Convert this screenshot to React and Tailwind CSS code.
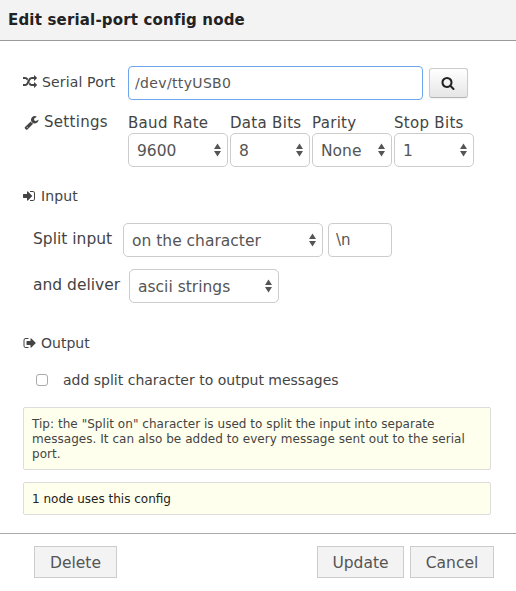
const ICONS = {
  random:
    'M666 481q-60 92-137 273-22-45-37-72.5t-40.5-63.5-51-56.5-63-35-81.5-14.5h-224q-14 0-23-9t-9-23v-192q0-14 9-23t23-9h224q250 0 410 225zm1126 799q0 14-9 23l-320 320q-9 9-23 9-13 0-22.5-9.5t-9.5-22.5v-192q-32 0-85 .5t-81 1-73-1-71-5-64-10.5-63-18.5-58-28.5-59-40-55-53.5-56-69.5q59-93 136-273 22 45 37 72.5t40.5 63.5 51 56.5 63 35 81.5 14.5h256v-192q0-14 9-23t23-9q12 0 24 10l319 319q9 9 9 23zm0-896q0 14-9 23l-320 320q-9 9-23 9-13 0-22.5-9.5t-9.5-22.5v-192h-256q-48 0-87 15t-69 45-51 61.5-45 77.5q-32 62-78 171-29 66-49.5 111t-54 105-64 100-74 83-90 68.5-106.5 42-128 16.5h-224q-14 0-23-9t-9-23v-192q0-14 9-23t23-9h224q48 0 87-15t69-45 51-61.5 45-77.5q32-62 78-171 29-66 49.5-111t54-105 64-100 74-83 90-68.5 106.5-42 128-16.5h256v-192q0-14 9-23t23-9q12 0 24 10l319 319q9 9 9 23z',
  wrench:
    'M448 1472q0-26-19-45t-45-19-45 19-19 45 19 45 45 19 45-19 19-45zm644-420l-682 682q-37 37-90 37-52 0-91-37l-106-108q-38-36-38-90 0-53 38-91l681-681q39 98 114.5 173.5t173.5 114.5zm634-435q0 39-23 106-47 134-164.5 217.5t-258.5 83.5q-185 0-316.5-131.5t-131.5-316.5 131.5-316.5 316.5-131.5q58 0 121.5 16.5t107.5 46.5q16 11 16 28t-16 28l-293 169v224l193 107q5-3 79-48.5t135.5-81 70.5-35.5q15 0 23.5 10t8.5 25z',
  search:
    'M1216 832q0-185-131.5-316.5t-316.5-131.5-316.5 131.5-131.5 316.5 131.5 316.5 316.5 131.5 316.5-131.5 131.5-316.5zm512 832q0 52-38 90t-90 38q-54 0-90-38l-343-342q-179 124-399 124-143 0-273.5-55.5t-225-150-150-225-55.5-273.5 55.5-273.5 150-225 225-150 273.5-55.5 273.5 55.5 225 150 150 225 55.5 273.5q0 220-124 399l343 343q37 37 37 90z',
  signIn:
    'M1312 896q0 26-19 45l-544 544q-19 19-45 19t-45-19-19-45v-288h-448q-26 0-45-19t-19-45v-384q0-26 19-45t45-19h448v-288q0-26 19-45t45-19 45 19l544 544q19 19 19 45zm352-352v704q0 119-84.5 203.5t-203.5 84.5h-320q-13 0-22.5-9.5t-9.5-22.5q0-4-1-20t-.5-26.5 3-23.5 10-19.5 20.5-6.5h320q66 0 113-47t47-113v-704q0-66-47-113t-113-47h-312l-11.5-1-11.5-3-8-5.5-7-9-2-13.5q0-4-1-20t-.5-26.5 3-23.5 10-19.5 20.5-6.5h320q119 0 203.5 84.5t84.5 203.5z',
  signOut:
    'M704 1440q0 4 1 20t.5 26.5-3 23.5-10 19.5-20.5 6.5h-320q-119 0-203.5-84.5t-84.5-203.5v-704q0-119 84.5-203.5t203.5-84.5h320q13 0 22.5 9.5t9.5 22.5q0 4 1 20t.5 26.5-3 23.5-10 19.5-20.5 6.5h-320q-66 0-113 47t-47 113v704q0 66 47 113t113 47h312l11.5 1 11.5 3 8 5.5 7 9 2 13.5zm928-544q0 26-19 45l-544 544q-19 19-45 19t-45-19-19-45v-288h-448q-26 0-45-19t-19-45v-384q0-26 19-45t45-19h448v-288q0-26 19-45t45-19 45 19l544 544q19 19 19 45z',
};

function Icon({ name, className = 'size-3.5' }) {
  return (
    <svg viewBox="0 0 1792 1792" fill="currentColor" className={`shrink-0 ${className}`}>
      <path d={ICONS[name]} />
    </svg>
  );
}

function Select({ value, className }) {
  return (
    <button
      type="button"
      className={`flex h-[34px] items-center justify-between rounded-[5px] border border-[#ccc] bg-white pr-[6px] pl-2 text-[15.5px] text-[#555] ${className}`}
    >
      <span className="pt-[2px] whitespace-nowrap">{value}</span>
      <svg viewBox="0 0 7 14" className="h-3.5 w-[7px] shrink-0" fill="#555">
        <path d="M3.5 0.5 7 6H0zM3.5 13.5 7 8H0z" />
      </svg>
    </button>
  );
}

function Setting({ label, value, className }) {
  return (
    <div className={className}>
      <div className="h-[22px] pt-px text-[15px] leading-[22px] tracking-[0.3px] whitespace-nowrap">
        {label}
      </div>
      <Select value={value} className="w-full" />
    </div>
  );
}

function FooterButton({ children, className }) {
  return (
    <button
      type="button"
      className={`h-8 border border-[#ccc] bg-[#f3f3f3] pt-[2px] text-[15.5px] text-[#555] ${className}`}
    >
      {children}
    </button>
  );
}

export default function App() {
  return (
    <div className="flex h-[591px] w-[516px] flex-col bg-white font-['DejaVu_Sans',Verdana,sans-serif] text-sm text-[#444]">
      <header className="flex h-[41px] shrink-0 items-center border-b border-[#999] bg-[#f3f3f3] pt-[2px] pl-2 text-[15px] font-bold tracking-[0.18px] whitespace-nowrap text-[#222]">
        Edit serial-port config node
      </header>

      <main className="flex h-[492px] shrink-0 flex-col pt-[25px] pr-[25px] pl-[23px]">
        <div className="flex h-[34px] items-center">
          <div className="flex w-[105px] items-center gap-[5px] pb-[2px] tracking-[0.15px] whitespace-nowrap">
            <Icon name="random" />
            Serial Port
          </div>
          <input
            type="text"
            defaultValue="/dev/ttyUSB0"
            className="h-[34px] w-[295px] rounded-[4px] border border-[#6ca6ec] px-1.5 text-sm tracking-[0.35px] text-[#555] outline-none"
          />
          <button
            type="button"
            className="ml-1.5 flex h-[30px] w-[39px] items-center justify-center rounded-[3px] border border-[#ccc] border-b-[#b3b3b3] bg-linear-to-b from-white to-[#e6e6e6] pr-px text-[#222] shadow-[0_1px_2px_rgba(0,0,0,0.05)]"
          >
            <Icon name="search" className="size-3.5" />
          </button>
        </div>

        <div className="mt-[11px] flex h-14">
          <div className="flex h-[22px] w-[105px] items-center gap-[5px] pt-px pl-px text-[15px] tracking-[0.3px] whitespace-nowrap">
            <Icon name="wrench" className="size-[15px]" />
            Settings
          </div>
          <div className="flex gap-0.5">
            <Setting label="Baud Rate" value="9600" className="w-[100px]" />
            <Setting label="Data Bits" value="8" className="w-20" />
            <Setting label="Parity" value="None" className="w-20" />
            <Setting label="Stop Bits" value="1" className="w-20" />
          </div>
        </div>

        <div className="mt-[19px] flex h-5 items-center gap-[5px] tracking-[0.15px]">
          <Icon name="signIn" className="-ml-px size-3.5" />
          Input
        </div>

        <div className="mt-[17px] flex h-[34px] items-center pl-[10px]">
          <span className="w-[90px] pb-[2px] text-[15.5px] whitespace-nowrap">Split input</span>
          <Select value="on the character" className="w-[200px]" />
          <input
            type="text"
            defaultValue="\n"
            className="ml-[5px] h-[34px] w-16 rounded-[4px] border border-[#ccc] px-[7px] text-[15px] text-[#555] outline-none"
          />
        </div>

        <div className="mt-3 flex h-[34px] items-center pl-[10px]">
          <span className="w-24 pb-[2px] text-[15.5px] whitespace-nowrap">and deliver</span>
          <Select value="ascii strings" className="w-[150px]" />
        </div>

        <div className="mt-[30px] flex h-5 items-center gap-1">
          <Icon name="signOut" />
          Output
        </div>

        <label className="mt-[17px] flex h-5 items-center pl-[13px] whitespace-nowrap">
          <input
            type="checkbox"
            className="size-3 appearance-none rounded-[3px] border border-[#aaa] bg-white"
          />
          <span className="ml-[15px]">add split character to output messages</span>
        </label>

        <div className="mt-[17px] h-[63px] shrink-0 rounded-[2px] border border-[#ddd] bg-[#ffffed] px-2 pt-[9px] text-[12px] leading-[15px] tracking-[0.04px] whitespace-nowrap">
          Tip: the "Split on" character is used to split the input into separate
          <br />
          messages. It can also be added to every message sent out to the serial
          <br />
          port.
        </div>

        <div className="mt-3 flex h-[33px] shrink-0 items-center rounded-[2px] border border-[#ddd] bg-[#ffffed] px-2 pt-[2px] text-[12px] text-[#222]">
          1 node uses this config
        </div>
      </main>

      <footer className="flex flex-1 border-t border-[#aaa] pt-3 pr-[22px] pl-[34px]">
        <FooterButton className="w-[83px]">Delete</FooterButton>
        <FooterButton className="ml-auto w-[87px]">Update</FooterButton>
        <FooterButton className="ml-1.5 w-[84px]">Cancel</FooterButton>
      </footer>
    </div>
  );
}
